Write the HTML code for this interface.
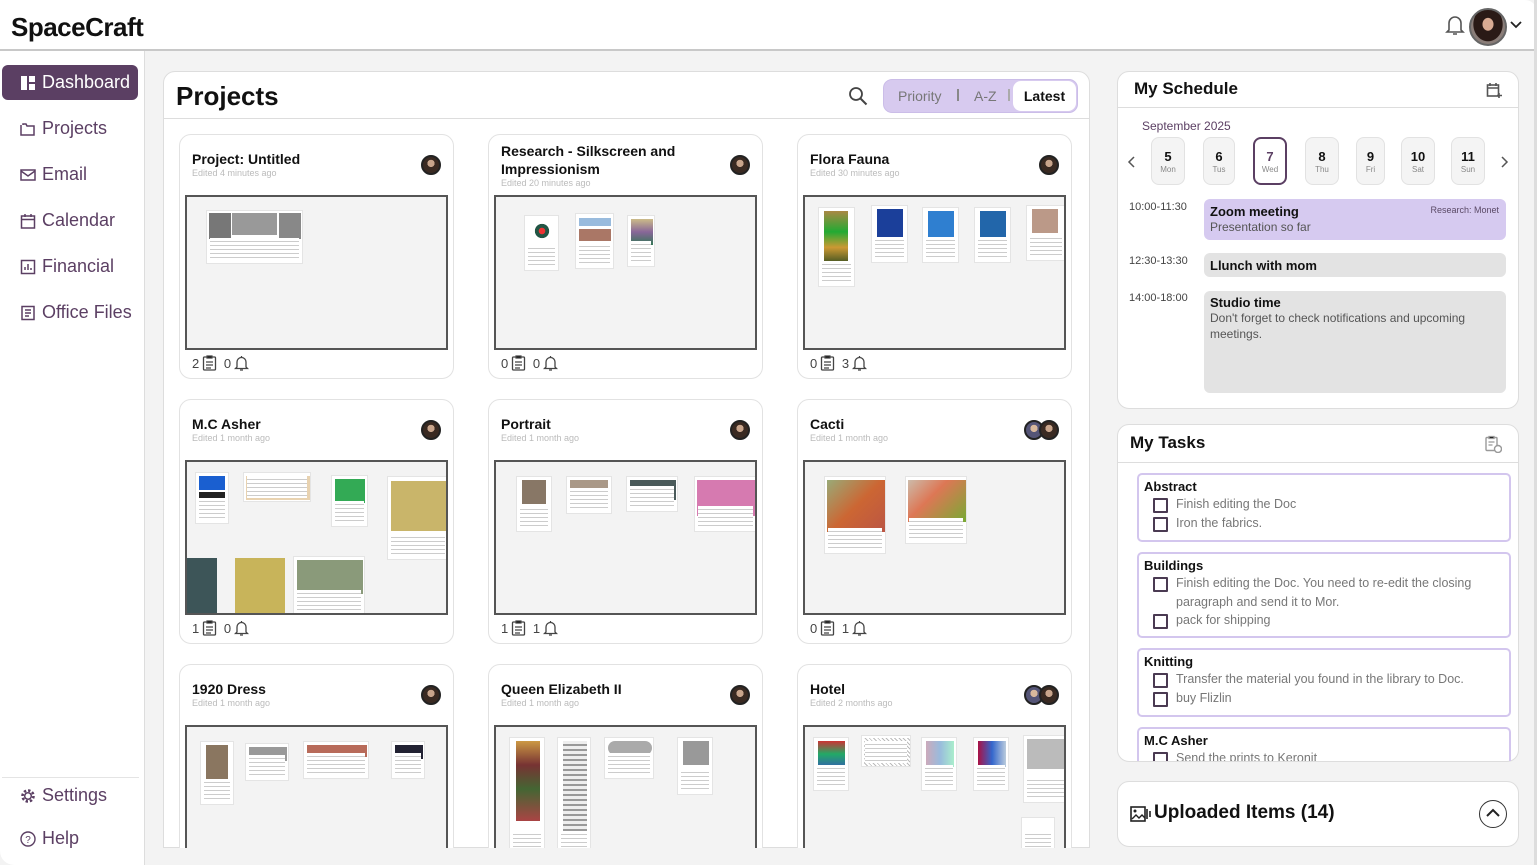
<!DOCTYPE html>
<html><head><meta charset="utf-8"><style>
*{box-sizing:border-box;margin:0;padding:0}
html,body{width:1537px;height:865px;overflow:hidden}
body{background:#f3f3f3;font-family:"Liberation Sans",sans-serif;position:relative;color:#111}
.a{position:absolute}
#hdr{left:0;top:0;width:1537px;height:51px;background:#fff;border-bottom:2px solid #c8c8c8;border-radius:0 12px 0 0}
#logo{left:11px;top:12px;font-size:26px;font-weight:bold;letter-spacing:-0.5px}
#side{left:0;top:51px;width:145px;height:814px;background:#fff;border-right:1px solid #ddd;border-radius:0 0 0 14px}
.nav{position:absolute;left:20px;font-size:18px;color:#5b3f63;display:flex;align-items:center;gap:6px}
.nav svg{width:16px;height:16px}
#dash{left:2px;top:65px;width:136px;height:35px;background:#5b3f63;border-radius:6px;color:#fff}
.panel{position:absolute;background:#fff;border:1px solid #ddd;border-radius:12px}
.card{position:absolute;width:275px;height:245px;background:#fff;border:1px solid #e2e2e2;border-radius:12px}
.card .t{position:absolute;left:12px;top:15px;font-size:14px;font-weight:bold;width:200px;line-height:18px}
.card .s{position:absolute;left:12px;top:33px;font-size:9px;color:#bbb}
.card .av{position:absolute;right:12px;top:20px;width:20px;height:20px;border-radius:50%;background:radial-gradient(circle at 50% 40%,#c9a58c 0 28%,#3a2a22 30%);border:2px solid #222}
.card .av2{right:27px;background:radial-gradient(circle at 50% 40%,#d8b89c 0 28%,#557 30%)}
.th{position:absolute;left:5px;top:60px;width:263px;height:155px;border:2px solid #555;background:#f3f3f3;overflow:hidden}
.ft{position:absolute;left:12px;top:220px;font-size:13px;color:#444;display:flex;align-items:center;gap:3px}
.ft svg{width:15px;height:16px}
.m{position:absolute;background:#fff;border:1px solid #e4e4e4;padding:2px}
.m:after{content:"";position:absolute;left:3px;right:3px;bottom:3px;height:22px;background:repeating-linear-gradient(#fff 0 3px,#ccc 3px 4px)}
.i{position:absolute}
.day{position:absolute;top:137px;width:34px;height:48px;background:#f4f4f4;border:1px solid #e2e2e2;border-radius:8px;text-align:center;font-weight:bold;font-size:13px;padding-top:11px}
.day span{display:block;font-size:8px;font-weight:normal;color:#888;margin-top:1px}
.tm{position:absolute;left:1129px;font-size:11px;color:#444}
.ev{position:absolute;left:1204px;width:302px;border-radius:6px;padding:4px 6px;font-size:13px}
.ev b{display:block;font-size:13px}
.ev span{color:#555;font-size:12px;line-height:16px}
.tk{position:absolute;left:1137px;width:374px;border:2px solid #d3c6ee;border-radius:5px;padding:4px 5px}
.tk b{font-size:13px;display:block;margin-bottom:1px}
.tk div{position:relative;padding-left:32px;font-size:12.5px;color:#777;line-height:18.5px}
.tk div:before{content:"";position:absolute;left:9px;top:3px;width:11px;height:11px;border:2px solid #4a3a52;border-radius:1px}
</style></head><body>
<div id="hdr" class="a"></div>
<div id="logo" class="a">SpaceCraft</div>
<svg class="a" style="left:1444px;top:13px" width="22" height="24" viewBox="0 0 22 24"><path d="M5 17V10a6 6 0 0 1 12 0v7l2 2H3z M9 21h4" fill="none" stroke="#555" stroke-width="1.6"/></svg>
<div class="a" style="left:1469px;top:8px;width:38px;height:38px;border-radius:50%;border:2px solid #666;background:radial-gradient(ellipse at 50% 42%,#d9ab93 0 22%,#2a1a16 24% 60%,#8a7d78 62%)"></div>
<svg class="a" style="left:1510px;top:21px" width="12" height="8"><path d="M1 1l5 5 5-5" fill="none" stroke="#222" stroke-width="1.8"/></svg>

<div id="side" class="a"></div>
<div id="dash" class="nav"><svg viewBox="0 0 16 16" style="margin-left:18px"><rect x="1" y="1" width="6" height="14" fill="#fff"/><rect x="9" y="1" width="6" height="6" fill="#fff"/><rect x="9" y="9" width="6" height="6" fill="#fff"/></svg>Dashboard</div>
<div class="nav" style="top:118px"><svg viewBox="0 0 16 16"><path d="M1 4v10h13V5H7L6 3H3v1" fill="none" stroke="#5b3f63" stroke-width="1.5"/></svg>Projects</div>
<div class="nav" style="top:164px"><svg viewBox="0 0 16 16"><rect x="1" y="3" width="14" height="10" fill="none" stroke="#5b3f63" stroke-width="1.5"/><path d="M1 4l7 5 7-5" fill="none" stroke="#5b3f63" stroke-width="1.5"/></svg>Email</div>
<div class="nav" style="top:210px"><svg viewBox="0 0 16 16"><rect x="1.5" y="3" width="13" height="12" fill="none" stroke="#5b3f63" stroke-width="1.5"/><path d="M1.5 6.5h13M5 1v3M11 1v3" stroke="#5b3f63" stroke-width="1.5"/></svg>Calendar</div>
<div class="nav" style="top:256px"><svg viewBox="0 0 16 16"><rect x="1.5" y="1.5" width="13" height="13" fill="none" stroke="#5b3f63" stroke-width="1.5"/><path d="M5 11V8M8 11V5M11 11V9" stroke="#5b3f63" stroke-width="1.5"/></svg>Financial</div>
<div class="nav" style="top:302px"><svg viewBox="0 0 16 16"><rect x="2" y="1.5" width="12" height="13" fill="none" stroke="#5b3f63" stroke-width="1.5"/><path d="M5 5h6M5 8h6M5 11h4" stroke="#5b3f63" stroke-width="1.5"/></svg>Office Files</div>
<div class="a" style="left:2px;top:777px;width:137px;height:1px;background:#e4e4e4"></div>
<div class="nav" style="top:785px"><svg viewBox="0 0 16 16"><circle cx="8" cy="8" r="5.5" fill="none" stroke="#5b3f63" stroke-width="2.6" stroke-dasharray="2.4 1.9"/><circle cx="8" cy="8" r="3.3" fill="none" stroke="#5b3f63" stroke-width="1.5"/></svg>Settings</div>
<div class="nav" style="top:828px"><svg viewBox="0 0 16 16"><circle cx="8" cy="8" r="7" fill="none" stroke="#5b3f63" stroke-width="1.4"/><text x="8" y="12" font-size="10" text-anchor="middle" fill="#5b3f63" font-family="Liberation Sans">?</text></svg>Help</div>

<div class="panel" style="left:163px;top:71px;width:927px;height:777px;border-radius:12px 12px 0 0;overflow:hidden">
<div class="a" style="left:0;top:46px;width:927px;height:1px;background:#ddd"></div>
<div class="a" style="left:12px;top:9px;font-size:26px;font-weight:bold">Projects</div>
<svg class="a" style="left:684px;top:14px" width="20" height="20"><circle cx="8" cy="8" r="6" fill="none" stroke="#444" stroke-width="1.8"/><path d="M12.5 12.5l6 6" stroke="#444" stroke-width="2"/></svg>
<div class="a" style="left:719px;top:7px;width:195px;height:34px;background:#d7caef;border:1px solid #cbbde8;border-radius:9px"></div>
<div class="a" style="left:734px;top:16px;font-size:14px;color:#777">Priority</div>
<div class="a" style="left:793px;top:17px;width:2px;height:12px;background:#888"></div>
<div class="a" style="left:810px;top:16px;font-size:14px;color:#777">A-Z</div>
<div class="a" style="left:844px;top:17px;width:2px;height:12px;background:#aaa"></div>
<div class="a" style="left:849px;top:9px;width:63px;height:30px;background:#fff;border-radius:8px;font-size:14px;font-weight:bold;text-align:center;line-height:30px">Latest</div>
</div>

<div style="position:absolute;left:0;top:0;width:1537px;height:848px;overflow:hidden">
<div class="card" style="left:179px;top:134px"><div class="t">Project: Untitled</div><div class="s">Edited 4 minutes ago</div><div class="av"></div>
<div class="th"><div class="m" style="left:19px;top:13px;width:97px;height:54px"><div class="i" style="left:2px;top:2px;width:22px;height:26px;background:#777"></div><div class="i" style="left:25px;top:2px;width:45px;height:22px;background:#999"></div><div class="i" style="left:72px;top:2px;width:22px;height:26px;background:#888"></div></div></div>
<div class="ft">2 <svg viewBox="0 0 15 16"><rect x="1.5" y="2" width="12" height="13" rx="1" fill="none" stroke="#444" stroke-width="1.3"/><path d="M5 1h5v2H5zM4 7h7M4 10h7M4 13h5" stroke="#444" stroke-width="1.2"/></svg>&nbsp;0 <svg viewBox="0 0 15 16"><path d="M3 12V7a4.5 4.5 0 0 1 9 0v5l1.5 1.5h-12zM6 15h3M7.5 1v1.5" fill="none" stroke="#444" stroke-width="1.3"/></svg></div></div>

<div class="card" style="left:488px;top:134px"><div class="t" style="top:7px">Research - Silkscreen and Impressionism</div><div class="s" style="top:43px">Edited 20 minutes ago</div><div class="av"></div>
<div class="th"><div class="m" style="left:28px;top:18px;width:35px;height:56px"><div class="i" style="left:6px;top:4px;width:22px;height:22px;background:radial-gradient(circle,#e33 0 20%,#254 22% 45%,transparent 47%)"></div></div><div class="m" style="left:79px;top:16px;width:39px;height:56px"><div class="i" style="left:3px;top:4px;width:32px;height:8px;background:#9bd"></div><div class="i" style="left:3px;top:15px;width:32px;height:12px;background:#a76"></div></div><div class="m" style="left:131px;top:18px;width:28px;height:52px"><div class="i" style="left:3px;top:3px;width:22px;height:26px;background:linear-gradient(#cb8,#869 50%,#375)"></div></div></div>
<div class="ft">0 <svg viewBox="0 0 15 16"><rect x="1.5" y="2" width="12" height="13" rx="1" fill="none" stroke="#444" stroke-width="1.3"/><path d="M5 1h5v2H5zM4 7h7M4 10h7M4 13h5" stroke="#444" stroke-width="1.2"/></svg>&nbsp;0 <svg viewBox="0 0 15 16"><path d="M3 12V7a4.5 4.5 0 0 1 9 0v5l1.5 1.5h-12zM6 15h3M7.5 1v1.5" fill="none" stroke="#444" stroke-width="1.3"/></svg></div></div>

<div class="card" style="left:797px;top:134px"><div class="t">Flora Fauna</div><div class="s">Edited 30 minutes ago</div><div class="av"></div>
<div class="th"><div class="m" style="left:13px;top:10px;width:37px;height:80px"><div class="i" style="left:5px;top:3px;width:24px;height:52px;background:linear-gradient(#a84,#2a3 40%,#c93 70%,#452)"></div></div><div class="m" style="left:66px;top:8px;width:37px;height:58px"><div class="i" style="left:5px;top:3px;width:26px;height:28px;background:#1b3f9a"></div></div><div class="m" style="left:117px;top:10px;width:37px;height:56px"><div class="i" style="left:5px;top:3px;width:26px;height:26px;background:#2f7fd0"></div></div><div class="m" style="left:169px;top:10px;width:37px;height:56px"><div class="i" style="left:5px;top:3px;width:26px;height:26px;background:#26a;"></div></div><div class="m" style="left:221px;top:8px;width:40px;height:56px"><div class="i" style="left:5px;top:3px;width:26px;height:24px;background:#b98"></div></div></div>
<div class="ft">0 <svg viewBox="0 0 15 16"><rect x="1.5" y="2" width="12" height="13" rx="1" fill="none" stroke="#444" stroke-width="1.3"/><path d="M5 1h5v2H5zM4 7h7M4 10h7M4 13h5" stroke="#444" stroke-width="1.2"/></svg>&nbsp;3 <svg viewBox="0 0 15 16"><path d="M3 12V7a4.5 4.5 0 0 1 9 0v5l1.5 1.5h-12zM6 15h3M7.5 1v1.5" fill="none" stroke="#444" stroke-width="1.3"/></svg></div></div>

<div class="card" style="left:179px;top:399px"><div class="t">M.C Asher</div><div class="s">Edited 1 month ago</div><div class="av"></div>
<div class="th"><div class="m" style="left:8px;top:10px;width:34px;height:52px"><div class="i" style="left:3px;top:3px;width:26px;height:14px;background:#1a5fd0"></div><div class="i" style="left:3px;top:19px;width:26px;height:10px;background:#222"></div></div><div class="m" style="left:56px;top:10px;width:68px;height:30px;padding:0"><div class="i" style="left:2px;top:3px;width:64px;height:24px;background:#e8d2b0"></div></div><div class="m" style="left:144px;top:13px;width:37px;height:52px"><div class="i" style="left:3px;top:3px;width:30px;height:24px;background:#3a5"></div></div><div class="m" style="left:200px;top:14px;width:62px;height:84px"><div class="i" style="left:3px;top:4px;width:56px;height:50px;background:#c9b56a"></div></div><div class="i" style="left:0;top:96px;width:30px;height:60px;background:#3d5558"></div><div class="i" style="left:48px;top:96px;width:50px;height:60px;background:#c8b45a"></div><div class="m" style="left:106px;top:94px;width:72px;height:60px"><div class="i" style="left:3px;top:3px;width:66px;height:34px;background:#8a9a7a"></div></div></div>
<div class="ft">1 <svg viewBox="0 0 15 16"><rect x="1.5" y="2" width="12" height="13" rx="1" fill="none" stroke="#444" stroke-width="1.3"/><path d="M5 1h5v2H5zM4 7h7M4 10h7M4 13h5" stroke="#444" stroke-width="1.2"/></svg>&nbsp;0 <svg viewBox="0 0 15 16"><path d="M3 12V7a4.5 4.5 0 0 1 9 0v5l1.5 1.5h-12zM6 15h3M7.5 1v1.5" fill="none" stroke="#444" stroke-width="1.3"/></svg></div></div>

<div class="card" style="left:488px;top:399px"><div class="t">Portrait</div><div class="s">Edited 1 month ago</div><div class="av"></div>
<div class="th"><div class="m" style="left:20px;top:14px;width:36px;height:56px"><div class="i" style="left:5px;top:3px;width:24px;height:24px;background:#876"></div></div><div class="m" style="left:70px;top:14px;width:46px;height:38px"><div class="i" style="left:3px;top:3px;width:38px;height:18px;background:#a98"></div></div><div class="m" style="left:130px;top:14px;width:52px;height:36px"><div class="i" style="left:3px;top:3px;width:46px;height:20px;background:#4a5a5a"></div></div><div class="m" style="left:198px;top:14px;width:63px;height:56px"><div class="i" style="left:2px;top:3px;width:58px;height:36px;background:#d67ab0"></div></div></div>
<div class="ft">1 <svg viewBox="0 0 15 16"><rect x="1.5" y="2" width="12" height="13" rx="1" fill="none" stroke="#444" stroke-width="1.3"/><path d="M5 1h5v2H5zM4 7h7M4 10h7M4 13h5" stroke="#444" stroke-width="1.2"/></svg>&nbsp;1 <svg viewBox="0 0 15 16"><path d="M3 12V7a4.5 4.5 0 0 1 9 0v5l1.5 1.5h-12zM6 15h3M7.5 1v1.5" fill="none" stroke="#444" stroke-width="1.3"/></svg></div></div>

<div class="card" style="left:797px;top:399px"><div class="t">Cacti</div><div class="s">Edited 1 month ago</div><div class="av av2"></div><div class="av"></div>
<div class="th"><div class="m" style="left:19px;top:14px;width:62px;height:78px"><div class="i" style="left:2px;top:3px;width:58px;height:52px;background:linear-gradient(135deg,#9a7 ,#c63 50%,#b54 )"></div></div><div class="m" style="left:100px;top:14px;width:62px;height:68px"><div class="i" style="left:2px;top:3px;width:58px;height:42px;background:linear-gradient(135deg,#cba,#d75 40%,#7a3)"></div></div></div>
<div class="ft">0 <svg viewBox="0 0 15 16"><rect x="1.5" y="2" width="12" height="13" rx="1" fill="none" stroke="#444" stroke-width="1.3"/><path d="M5 1h5v2H5zM4 7h7M4 10h7M4 13h5" stroke="#444" stroke-width="1.2"/></svg>&nbsp;1 <svg viewBox="0 0 15 16"><path d="M3 12V7a4.5 4.5 0 0 1 9 0v5l1.5 1.5h-12zM6 15h3M7.5 1v1.5" fill="none" stroke="#444" stroke-width="1.3"/></svg></div></div>

<div class="card" style="left:179px;top:664px"><div class="t">1920 Dress</div><div class="s">Edited 1 month ago</div><div class="av"></div>
<div class="th"><div class="m" style="left:13px;top:14px;width:34px;height:64px"><div class="i" style="left:5px;top:3px;width:22px;height:38px;background:#8a7660"></div></div><div class="m" style="left:58px;top:16px;width:44px;height:38px"><div class="i" style="left:3px;top:3px;width:38px;height:14px;background:#999"></div></div><div class="m" style="left:116px;top:14px;width:66px;height:38px"><div class="i" style="left:3px;top:3px;width:60px;height:12px;background:#b86b5a"></div></div><div class="m" style="left:204px;top:14px;width:34px;height:38px"><div class="i" style="left:3px;top:3px;width:28px;height:14px;background:#223"></div></div></div>
</div>

<div class="card" style="left:488px;top:664px"><div class="t">Queen Elizabeth II</div><div class="s">Edited 1 month ago</div><div class="av"></div>
<div class="th"><div class="m" style="left:13px;top:10px;width:36px;height:120px"><div class="i" style="left:6px;top:3px;width:24px;height:80px;background:linear-gradient(#c94,#733 30%,#463 60%,#a44)"></div></div><div class="m" style="left:61px;top:10px;width:34px;height:120px"><div class="i" style="left:5px;top:3px;width:24px;height:90px;background:repeating-linear-gradient(#eee 0 3px,#999 3px 5px)"></div></div><div class="m" style="left:108px;top:10px;width:50px;height:42px"><div class="i" style="left:3px;top:3px;width:44px;height:14px;background:#aaa;border-radius:7px"></div></div><div class="m" style="left:181px;top:10px;width:36px;height:58px"><div class="i" style="left:5px;top:3px;width:26px;height:24px;background:#999"></div></div></div>
</div>

<div class="card" style="left:797px;top:664px"><div class="t">Hotel</div><div class="s">Edited 2 months ago</div><div class="av av2"></div><div class="av"></div>
<div class="th"><div class="m" style="left:8px;top:10px;width:36px;height:54px"><div class="i" style="left:4px;top:3px;width:27px;height:26px;background:linear-gradient(#c33,#2a6 50%,#36a)"></div></div><div class="m" style="left:56px;top:8px;width:50px;height:32px;padding:0"><div class="i" style="left:2px;top:2px;width:46px;height:28px;background:repeating-linear-gradient(45deg,#fff 0 2px,#bbb 2px 3px)"></div></div><div class="m" style="left:116px;top:10px;width:36px;height:54px"><div class="i" style="left:4px;top:3px;width:28px;height:26px;background:linear-gradient(90deg,#cab,#9bd,#aec)"></div></div><div class="m" style="left:168px;top:10px;width:36px;height:54px"><div class="i" style="left:4px;top:3px;width:28px;height:26px;background:linear-gradient(90deg,#a14,#36c,#bcd)"></div></div><div class="m" style="left:218px;top:8px;width:46px;height:68px"><div class="i" style="left:3px;top:3px;width:40px;height:30px;background:#bbb"></div></div><div class="m" style="left:216px;top:90px;width:34px;height:40px"></div></div>
</div>
</div>

<div class="panel" style="left:1117px;top:71px;width:402px;height:338px"></div>
<div class="a" style="left:1118px;top:107px;width:400px;height:1px;background:#ddd"></div>
<div class="a" style="left:1134px;top:79px;font-size:17px;font-weight:bold">My Schedule</div>
<svg class="a" style="left:1486px;top:82px" width="16" height="16"><rect x="1.5" y="3" width="11" height="11" fill="none" stroke="#555" stroke-width="1.6"/><path d="M1.5 6h11M4 1v3M10 1v3M13 11v5M11 13.5h5" stroke="#555" stroke-width="1.6"/></svg>
<div class="a" style="left:1142px;top:119px;font-size:12px;color:#5b3f63">September 2025</div>
<svg class="a" style="left:1127px;top:155px" width="10" height="14"><path d="M7 2L2 7l5 5" fill="none" stroke="#555" stroke-width="1.5"/></svg>
<svg class="a" style="left:1499px;top:155px" width="10" height="14"><path d="M3 2l5 5-5 5" fill="none" stroke="#555" stroke-width="1.5"/></svg>
<div class="day" style="left:1151px">5<span>Mon</span></div>
<div class="day" style="left:1203px;width:32px">6<span>Tus</span></div>
<div class="day" style="left:1253px;background:#fff;border:2px solid #5b3f63;color:#5b3f63;padding-top:10px">7<span>Wed</span></div>
<div class="day" style="left:1305px">8<span>Thu</span></div>
<div class="day" style="left:1356px;width:29px">9<span>Fri</span></div>
<div class="day" style="left:1401px">10<span>Sat</span></div>
<div class="day" style="left:1451px">11<span>Sun</span></div>
<div class="tm" style="top:201px">10:00-11:30</div>
<div class="tm" style="top:255px">12:30-13:30</div>
<div class="tm" style="top:292px">14:00-18:00</div>
<div class="ev" style="top:199px;height:41px;background:#d6caf0;padding-top:5px"><b>Zoom meeting</b><span>Presentation so far</span><div class="a" style="right:7px;top:6px;font-size:9px;color:#5b4a66">Research: Monet</div></div>
<div class="ev" style="top:253px;height:24px;background:#e3e3e3;padding-top:5px"><b>Llunch with mom</b></div>
<div class="ev" style="top:291px;height:102px;background:#e3e3e3;padding-top:4px"><b>Studio time</b><span>Don't forget to check notifications and upcoming meetings.</span></div>

<div class="panel" style="left:1117px;top:424px;width:402px;height:338px;overflow:hidden">
<div class="a" style="left:0;top:37px;width:402px;height:1px;background:#ddd"></div>
<div class="a" style="left:12px;top:8px;font-size:17px;font-weight:bold">My Tasks</div>
<svg class="a" style="left:366px;top:10px" width="18" height="18"><rect x="2" y="2.5" width="11" height="13" rx="1" fill="none" stroke="#999" stroke-width="1.4"/><path d="M5 1.5h5v2H5zM4.5 7h6M4.5 10h4" stroke="#999" stroke-width="1.3"/><circle cx="14" cy="14" r="3.5" fill="#fff" stroke="#999" stroke-width="1.4"/></svg>
</div>
<div style="position:absolute;left:1117px;top:462px;width:402px;height:299px;overflow:hidden">
<div class="tk" style="left:20px;top:11px;height:69px"><b>Abstract</b><div>Finish editing the Doc</div><div>Iron the fabrics.</div></div>
<div class="tk" style="left:20px;top:90px;height:86px"><b>Buildings</b><div>Finish editing the Doc. You need to re-edit the closing paragraph and send it to Mor.</div><div>pack for shipping</div></div>
<div class="tk" style="left:20px;top:186px;height:69px"><b>Knitting</b><div>Transfer the material you found in the library to Doc.</div><div>buy Flizlin</div></div>
<div class="tk" style="left:20px;top:265px;height:60px"><b>M.C Asher</b><div>Send the prints to Keronit</div></div>
</div>

<div class="panel" style="left:1117px;top:781px;width:402px;height:66px"></div>
<svg class="a" style="left:1130px;top:806px" width="22" height="16"><rect x="1" y="1" width="14" height="14" fill="none" stroke="#222" stroke-width="1.6"/><circle cx="5" cy="5" r="1.5" fill="#222"/><path d="M2 13l4-4 3 3 3-3 3 3" fill="none" stroke="#222" stroke-width="1.4"/><path d="M17 3v10M20 5v6" stroke="#222" stroke-width="1.6"/></svg>
<div class="a" style="left:1154px;top:802px;font-size:19px;font-weight:bold">Uploaded Items (14)</div>
<div class="a" style="left:1479px;top:800px;width:28px;height:28px;border-radius:50%;border:1.5px solid #333"></div>
<svg class="a" style="left:1485px;top:808px" width="16" height="10"><path d="M2 8l6-6 6 6" fill="none" stroke="#222" stroke-width="2"/></svg>
<div class="a" style="left:1534px;top:0;width:3px;height:865px;background:#ddd"></div>
</body></html>
